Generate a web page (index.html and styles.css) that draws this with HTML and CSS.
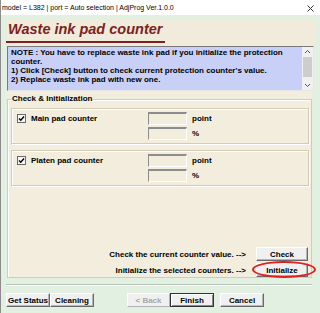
FILE: index.html
```html
<!DOCTYPE html>
<html lang="en">
<head>
    <meta charset="UTF-8">
    <meta name="viewport" content="width=device-width, initial-scale=1.0">
    <title>Waste ink pad counter</title>
    <link rel="stylesheet" href="styles.css">
</head>
<body>
    <div class="window">
        <!-- Title bar -->
        <div class="titlebar">
            <span class="title">model = L382 | port = Auto selection | AdjProg Ver.1.0.0</span>
            <svg class="close" width="7" height="7" viewBox="0 0 7 7">
                <path d="M0.5 0.5 L6.5 6.5 M6.5 0.5 L0.5 6.5" stroke="#333" stroke-width="1" fill="none"/>
            </svg>
        </div>

        <div class="client">
            <div class="header">
                <span class="heading">Waste ink pad counter</span>
            </div>

            <!-- Note box -->
            <div class="note">
                <div class="note-text">
                    <p>NOTE : You have to replace waste ink pad if you initialize the protection counter.</p>
                    <p>1) Click [Check] button to check current protection counter's value.</p>
                    <p>2) Replace waste ink pad with new one.</p>
                </div>
                <div class="scrollbar">
                    <svg class="arrow" width="11" height="8" viewBox="0 0 11 8">
                        <path d="M3 5 L5.5 2.5 L8 5" stroke="#555" stroke-width="1" fill="none"/>
                    </svg>
                    <div class="thumb"></div>
                    <svg class="arrow down" width="11" height="8" viewBox="0 0 11 8">
                        <path d="M3 3 L5.5 5.5 L8 3" stroke="#555" stroke-width="1" fill="none"/>
                    </svg>
                </div>
            </div>

            <!-- Check & Initialization -->
            <div class="page">
                <fieldset class="group">
                    <legend>Check &amp; Initialization</legend>

                    <div class="counter">
                        <label class="check">
                            <span class="checkbox">
                                <svg width="7" height="7" viewBox="0 0 7 7">
                                    <path d="M1 3.5 L2.8 5.3 L6 1.5" stroke="#000" stroke-width="1.4" fill="none"/>
                                </svg>
                            </span>
                            Main pad counter
                        </label>
                        <input class="field point-field" type="text" readonly>
                        <span class="unit point-unit">point</span>
                        <input class="field percent-field" type="text" readonly>
                        <span class="unit percent-unit">%</span>
                    </div>

                    <div class="counter">
                        <label class="check">
                            <span class="checkbox">
                                <svg width="7" height="7" viewBox="0 0 7 7">
                                    <path d="M1 3.5 L2.8 5.3 L6 1.5" stroke="#000" stroke-width="1.4" fill="none"/>
                                </svg>
                            </span>
                            Platen pad counter
                        </label>
                        <input class="field point-field" type="text" readonly>
                        <span class="unit point-unit">point</span>
                        <input class="field percent-field" type="text" readonly>
                        <span class="unit percent-unit">%</span>
                    </div>

                    <div class="actions">
                        <span class="action-label">Check the current counter value. --&gt;</span>
                        <button class="btn">Check</button>
                        <span class="action-label">Initialize the selected counters. --&gt;</span>
                        <button class="btn">Initialize</button>
                    </div>
                </fieldset>
            </div>

            <div class="separator"></div>

            <!-- Wizard buttons -->
            <div class="buttons">
                <button class="btn">Get Status</button>
                <button class="btn">Cleaning</button>
                <button class="btn back" disabled>&lt; Back</button>
                <button class="btn default">Finish</button>
                <button class="btn cancel">Cancel</button>
            </div>
        </div>

        <div class="highlight"></div>
    </div>
</body>
</html>
```

FILE: styles.css
```css
/* General styling */
body {
    margin: 0;
    font-family: "Liberation Sans", Arial, sans-serif;
    font-size: 8px;
    font-weight: bold;
    color: #000;
    background-color: rgb(226, 240, 226);
}

.window {
    position: relative;
    width: 319px;
    height: 313px;
    border-left: 1px solid #8c8c8c;
    background-color: rgb(226, 240, 226);
    overflow: hidden;
}

/* Title bar */
.titlebar {
    display: flex;
    align-items: center;
    justify-content: space-between;
    height: 15px;
    padding: 0 6px 0 1px;
    background-color: white;
}

.title {
    font-size: 7px;
    font-weight: normal;
}

.close {
    display: block;
    margin-top: 1px;
}

.client {
    padding: 5px 0 0 5px;
}

/* Header */
.header {
    width: 310px;
    height: 26px;
    box-sizing: border-box;
    padding-top: 2px;
    background-color: rgb(240, 235, 218);
}

.heading {
    display: inline-block;
    padding: 0 3px 5px 2px;
    font-size: 14.5px;
    line-height: 14px;
    font-style: italic;
    color: rgb(125, 34, 34);
    border-bottom: 2px solid rgb(125, 34, 34);
}

/* Note box */
.note {
    display: flex;
    width: 307px;
    height: 45px;
    box-sizing: border-box;
    margin-left: 1px;
    border: 1px solid;
    border-color: #7a7a7a #e6e6e6 #e6e6e6 #7a7a7a;
    background-color: rgb(200, 208, 248);
}

.note-text {
    flex: 1;
    padding: 1px 0 0 3px;
    line-height: 9px;
}

.note-text p {
    margin: 0;
}

.scrollbar {
    display: flex;
    flex-direction: column;
    align-items: center;
    width: 11px;
    background-color: #f0f0f0;
}

.arrow {
    display: block;
    margin-top: 1px;
}

.arrow.down {
    margin-top: auto;
    margin-bottom: 1px;
}

.thumb {
    width: 9px;
    height: 20px;
    margin-top: 1px;
    background-color: #cdcdcd;
}

/* Group box */
.page {
    width: 305px;
    margin-left: 1px;
    padding-top: 3px;
    background-color: rgb(242, 237, 221);
}

.group {
    margin: 0;
    padding: 0 2px 0 3px;
    border: 1px solid #d2cbb6;
    box-shadow: inset 1px 1px 0 #fff;
}

.group legend {
    padding: 0 1px;
    line-height: 10px;
    background-color: rgb(242, 237, 221);
}

.counter {
    display: grid;
    grid-template-columns: 126px 39px auto;
    grid-template-rows: 13px 13px;
    column-gap: 5px;
    row-gap: 2px;
    align-items: center;
    margin-top: 4px;
    padding: 3px 0 3px 5px;
    border: 1px solid #d2cbb6;
    box-shadow: inset 1px 1px 0 #fff, 1px 1px 0 #fff;
}

.counter + .counter {
    margin-top: 6px;
}

.check {
    grid-column: 1;
    grid-row: 1;
    display: flex;
    align-items: center;
    gap: 5px;
}

.checkbox {
    display: flex;
    align-items: center;
    justify-content: center;
    width: 7px;
    height: 7px;
    border: 1px solid #6a6a6a;
    background-color: #f6f6f6;
}

.checkbox svg {
    display: block;
}

.field {
    width: 39px;
    height: 13px;
    box-sizing: border-box;
    padding: 0;
    border: 1px solid;
    border-color: #8d8d8d #fff #fff #8d8d8d;
    border-top-width: 2px;
    background-color: rgb(242, 237, 221);
}

.point-field {
    grid-column: 2;
    grid-row: 1;
}

.point-unit {
    grid-column: 3;
    grid-row: 1;
}

.percent-field {
    grid-column: 2;
    grid-row: 2;
}

.percent-unit {
    grid-column: 3;
    grid-row: 2;
}

/* Action rows */
.actions {
    display: grid;
    grid-template-columns: 1fr 52px;
    column-gap: 10px;
    row-gap: 2px;
    align-items: center;
    margin: 61px 1px 0 0;
}

.action-label {
    text-align: right;
}

/* Buttons */
.btn {
    height: 14px;
    padding: 0;
    font-family: "Liberation Sans", Arial, sans-serif;
    font-size: 8px;
    font-weight: bold;
    color: #000;
    background-color: #f0f0f0;
    border: 1px solid;
    border-color: #fff #6b6b6b #6b6b6b #fff;
    box-shadow: inset -1px -1px 0 #b4b4b4;
}

.separator {
    width: 306px;
    margin-top: 6px;
    border-top: 1px solid #b8c4b8;
    border-bottom: 1px solid #fff;
}

.buttons {
    display: flex;
    margin-top: 7px;
}

.buttons .btn {
    width: 44px;
}

.buttons .back {
    width: 43px;
    margin-left: 33px;
    color: #a8a8a8;
    border-color: #fff #b0b0b0 #b0b0b0 #fff;
    box-shadow: none;
}

.buttons .default {
    border: 1px solid #333;
    box-shadow: inset 1px 1px 0 #fff, inset -1px -1px 0 #8a8a8a;
}

.buttons .cancel {
    margin-left: 6px;
}

/* Red annotation around Initialize */
.highlight {
    position: absolute;
    left: 251px;
    top: 261px;
    width: 60px;
    height: 13px;
    border: 2px solid rgb(226, 30, 30);
    border-radius: 50%;
}
```
